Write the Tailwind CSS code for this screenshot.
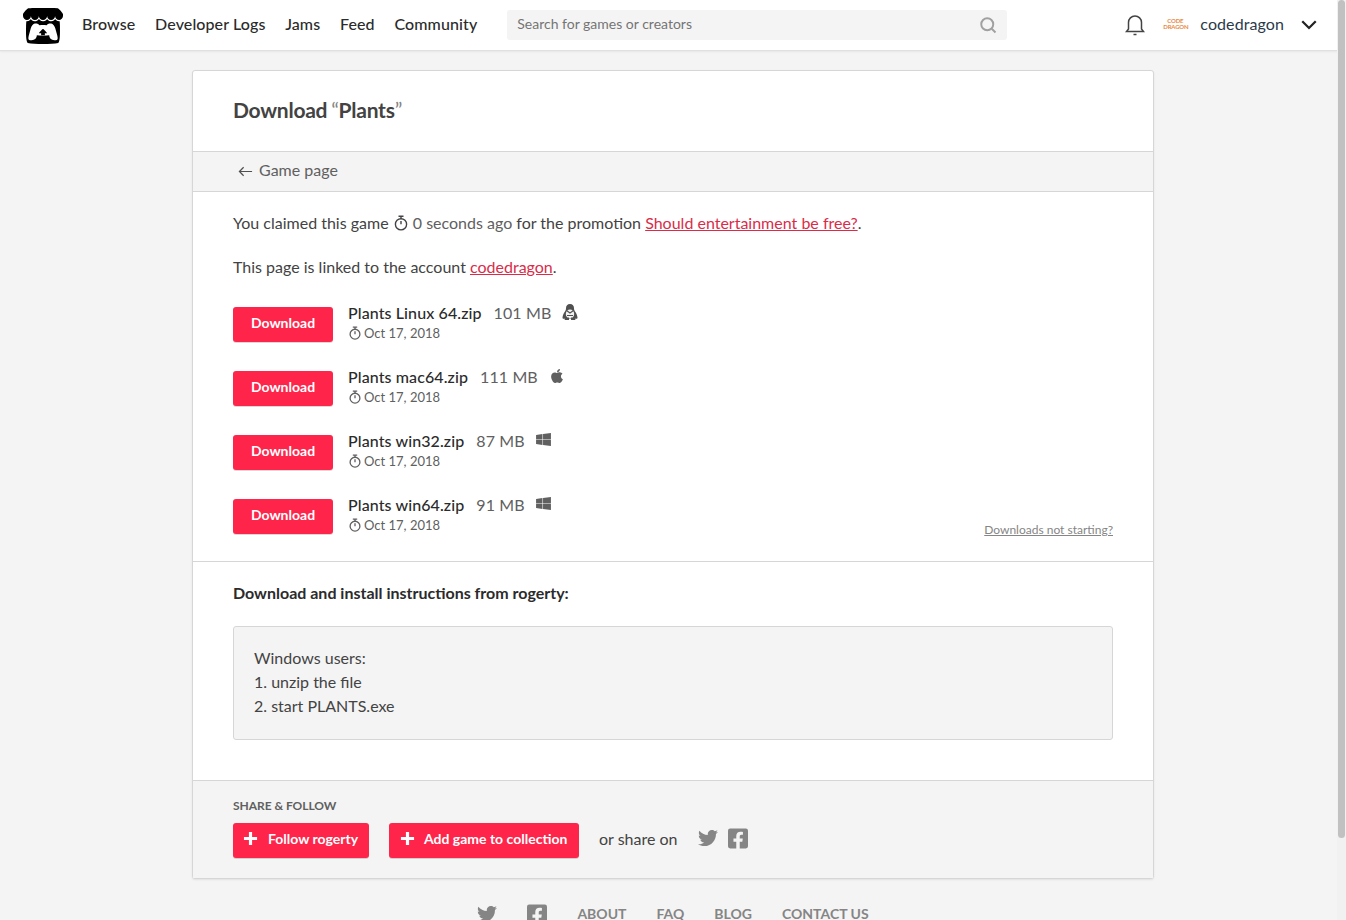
<!DOCTYPE html>
<html lang="en">
<head>
    <meta charset="UTF-8">
    <title>Download Plants</title>
    <script src="https://cdn.jsdelivr.net/npm/@tailwindcss/browser@4"></script>
</head>
<body class="bg-[#f4f4f4] text-[#434343] font-['Lato',sans-serif] text-base h-[920px] overflow-hidden relative">
    <!-- top bar -->
    <header class="h-[51px] bg-white border-b border-[#e0e0e0] shadow-[0_1px_2px_rgba(0,0,0,0.06)] flex items-center pl-[23px]">
        <svg viewBox="0 0 24 24" class="w-[40px] h-[40px] shrink-0 fill-black mt-[1px]"><path d="M3.13 1.338C2.08 1.96.02 4.328 0 4.95v1.03c0 1.303 1.22 2.45 2.325 2.45 1.33 0 2.436-1.102 2.436-2.41 0 1.308 1.07 2.41 2.4 2.41 1.328 0 2.362-1.102 2.362-2.41 0 1.308 1.137 2.41 2.466 2.41h.024c1.33 0 2.466-1.102 2.466-2.41 0 1.308 1.034 2.41 2.363 2.41 1.33 0 2.4-1.102 2.4-2.41 0 1.308 1.106 2.41 2.435 2.41C22.78 8.43 24 7.282 24 5.98V4.95c-.02-.62-2.082-2.99-3.13-3.612-3.253-.114-5.508-.134-8.87-.133-3.362 0-7.945.053-8.87.133zm6.376 6.477a2.74 2.74 0 0 1-.468.602c-.5.49-1.19.795-1.947.795a2.786 2.786 0 0 1-1.95-.795c-.182-.178-.32-.37-.446-.59-.127.222-.303.412-.486.59a2.788 2.788 0 0 1-1.95.795c-.092 0-.187-.025-.264-.052-.107 1.113-.152 2.176-.168 2.95v.005l-.006 1.167c.02 2.334-.23 7.564 1.03 8.85 1.952.454 5.545.662 9.15.663 3.605 0 7.198-.21 9.15-.664 1.26-1.284 1.01-6.514 1.03-8.848l-.006-1.167v-.004c-.016-.775-.06-1.838-.168-2.95-.077.026-.172.052-.263.052a2.788 2.788 0 0 1-1.95-.795c-.184-.178-.36-.368-.486-.59-.127.22-.265.412-.447.59a2.786 2.786 0 0 1-1.95.794c-.76 0-1.446-.303-1.948-.793a2.74 2.74 0 0 1-.468-.602 2.738 2.738 0 0 1-.467.602 2.772 2.772 0 0 1-1.98.793 2.77 2.77 0 0 1-1.947-.793 2.738 2.738 0 0 1-.467-.602zM7.54 10.57l.002.002c.79.002 1.49 0 2.36.95.683-.072 1.4-.108 2.118-.107.717 0 1.434.035 2.118.107.87-.95 1.57-.948 2.36-.95h.002c.373 0 1.865 0 2.904 2.92l1.116 4.005c.828 2.98-.265 3.053-1.628 3.056-2.02-.075-3.14-1.542-3.14-3.01-1.12.184-2.427.275-3.733.276-1.306 0-2.612-.092-3.733-.275 0 1.467-1.12 2.934-3.14 3.01-1.363-.004-2.456-.077-1.628-3.057l1.116-4.005c1.04-2.92 2.53-2.92 2.905-2.92zM12 13.7v.002c-.002.002-2.13 1.955-2.513 2.65l1.393-.056v1.215c0 .057.558.034 1.12.008.56.026 1.12.05 1.12-.008v-1.215l1.393.057C14.13 15.657 12 13.702 12 13.702z"/></svg>
        <nav class="flex gap-[19.75px] ml-[19px] font-medium text-[#2b2b2b] mt-[-3px] tracking-[0.1px]">
            <a href="#">Browse</a>
            <a href="#">Developer Logs</a>
            <a href="#">Jams</a>
            <a href="#">Feed</a>
            <a href="#">Community</a>
        </nav>
        <div class="ml-[30px] w-[500px] h-[30px] bg-[#f4f4f4] rounded-[3px] flex items-center justify-between pl-[10px] pr-[10px] text-sm text-[#757575] mt-[-1px]">
            <span class="mt-[-2px]">Search for games or creators</span>
            <svg viewBox="0 0 24 24" class="w-[18px] h-[18px] fill-none stroke-[#a0a0a0] stroke-[2.6]"><circle cx="11" cy="11" r="8"/><path d="M17 17l5 5"/></svg>
        </div>
        <svg viewBox="0 0 20 22" class="w-[20px] h-[22px] ml-[118px] fill-none stroke-[#434343] stroke-[1.5]"><path d="M3.500 15V8.500a6.500 6.500 0 0 1 13 0V15l2 2.500H1.500z"/><path d="M8.500 20.500h3"/></svg>
        <div class="ml-[18px] w-[24px] text-[6px] leading-[6px] font-bold text-center text-[#e8893f] tracking-[-0.2px] mt-[-3px]"><div>CODE</div><div>DRAGON</div></div>
        <span class="ml-[13px] text-[#2b3a4a] mt-[-3px] tracking-[0.1px]">codedragon</span>
        <svg viewBox="0 0 24 24" class="w-[18px] h-[18px] ml-[16px] fill-none stroke-[#222] stroke-[3] mt-[-1px]"><path d="M3 7l9 9 9-9"/></svg>
    </header>

    <!-- card -->
    <main class="w-[962px] mx-auto mt-[19px] bg-white border border-[#d6d6d6] rounded-[3px] shadow-[0_1px_2px_rgba(0,0,0,0.08)]">
        <h2 class="h-[80px] flex items-center px-[40px] pb-[2px] text-[21px] tracking-[-0.25px] font-bold text-[#434343] whitespace-pre"><span>Download </span><span class="font-normal text-[#858585] ml-[-1px]">“</span><span>Plants</span><span class="font-normal text-[#858585]">”</span></h2>

        <div class="h-[41px] bg-[#f4f4f4] border-y border-[#d6d6d6] flex items-center pl-[45px] text-[#606060]">
            <svg viewBox="0 0 16 16" class="w-[15px] h-[15px] mr-[6px] fill-none stroke-[#505050] stroke-[1.3]"><path d="M15 8H1.500M6 3.500L1.500 8 6 12.500"/></svg>
            <a href="#" class="mt-[-3px]">Game page</a>
        </div>

        <section class="px-[40px] pt-[19px] pb-[31px] border-b border-[#d6d6d6]">
            <p class="h-[24px] leading-[24px] flex items-center whitespace-pre">You claimed this game <svg viewBox="0 0 16 16" class="w-[16px] h-[16px] fill-none stroke-[#434343] stroke-[1.4] mt-[-1px]"><circle cx="8" cy="9.300" r="5.600"/><path d="M5.500 1.200h5M8 1.200v2.500M8 9.300V6"/></svg><span class="text-[#606060]"> 0 seconds ago</span> for the promotion <a href="#" class="text-[#da2c49] underline">Should entertainment be free?</a>.</p>
            <p class="mt-[20px] h-[24px] leading-[24px]">This page is linked to the account <a href="#" class="text-[#da2c49] underline">codedragon</a>.</p>

            <div class="relative mt-[24px] flex flex-col gap-[29px]">
                <div class="flex items-start h-[35px]">
                    <a href="#" class="mt-[4px] w-[100px] h-[35px] bg-[#ff2449] rounded-[3px] text-white text-sm font-bold flex items-center justify-center pb-[4px] shadow-[0_1px_0_rgba(0,0,0,0.15)]">Download</a>
                    <div class="ml-[15px]">
                        <div class="flex items-center h-[20px] leading-[20px] tracking-[0.1px]">
                            <strong class="font-medium text-[#2b2b2b]">Plants Linux 64.zip</strong>
                            <span class="ml-[12px] text-[#606060]">101 MB</span>
                            <svg viewBox="0 0 16 16" class="w-[16px] h-[16px] ml-[11px] mt-[-3px]"><path fill="#505050" d="M8 0c2.600 0 4 1.800 4 4.200 0 1.700.6 2.600 1.400 3.800.8 1.200 1.800 3 2.100 5.500.1.900-.4 1.200-1.200 1.200H1.700c-.8 0-1.300-.3-1.200-1.200C.8 11 1.800 9.200 2.600 8 3.400 6.800 4 5.900 4 4.200 4 1.800 5.400 0 8 0z"/><ellipse cx="8" cy="10" rx="4.200" ry="4.600" fill="#f2f2f2"/><path d="M4.500 6.500L8 9l3.500-2.500M5 11.500h6" fill="none" stroke="#505050" stroke-width="1.100"/><path fill="#505050" d="M3.500 13.500h3.500V16H2.500zM9 13.500h3.500l1 2.500H9z"/></svg>
                        </div>
                        <div class="flex items-center text-[13px] text-[#606060] h-[20px] mt-[1px]"><svg viewBox="0 0 16 16" class="w-[14px] h-[14px] mr-[2px] mt-[-3px] fill-none stroke-[#606060] stroke-[1.500]"><circle cx="8" cy="9.300" r="5.600"/><path d="M5.500 1.200h5M8 1.200v2.500M8 9.300V6"/></svg>Oct 17, 2018</div>
                    </div>
                </div>
                <div class="flex items-start h-[35px]">
                    <a href="#" class="mt-[4px] w-[100px] h-[35px] bg-[#ff2449] rounded-[3px] text-white text-sm font-bold flex items-center justify-center pb-[4px] shadow-[0_1px_0_rgba(0,0,0,0.15)]">Download</a>
                    <div class="ml-[15px]">
                        <div class="flex items-center h-[20px] leading-[20px] tracking-[0.1px]">
                            <strong class="font-medium text-[#2b2b2b]">Plants mac64.zip</strong>
                            <span class="ml-[12px] text-[#606060]">111 MB</span>
                            <svg viewBox="0 0 384 512" class="w-[14px] h-[16px] ml-[12px] mt-[-3px] fill-[#606060]"><path d="M318.700 268.700c-.2-36.700 16.400-64.400 50-84.800-18.800-26.900-47.200-41.700-84.700-44.600-35.500-2.800-74.300 20.700-88.500 20.700-15 0-49.400-19.700-76.400-19.700C63.300 141.200 4 184.800 4 273.500q0 39.300 14.400 81.200c12.800 36.700 59 126.700 107.200 125.200 25.200-.6 43-17.900 75.800-17.900 31.800 0 48.300 17.900 76.400 17.900 48.600-.7 90.400-82.500 102.600-119.300-65.200-30.700-61.700-90-61.700-91.900zm-56.600-164.200c27.300-32.400 24.800-61.900 24-72.500-24.100 1.400-52 16.400-67.900 34.900-17.500 19.800-27.800 44.300-25.600 71.900 26.100 2 49.900-11.400 69.500-34.300z"/></svg>
                        </div>
                        <div class="flex items-center text-[13px] text-[#606060] h-[20px] mt-[1px]"><svg viewBox="0 0 16 16" class="w-[14px] h-[14px] mr-[2px] mt-[-3px] fill-none stroke-[#606060] stroke-[1.500]"><circle cx="8" cy="9.300" r="5.600"/><path d="M5.500 1.200h5M8 1.200v2.500M8 9.300V6"/></svg>Oct 17, 2018</div>
                    </div>
                </div>
                <div class="flex items-start h-[35px]">
                    <a href="#" class="mt-[4px] w-[100px] h-[35px] bg-[#ff2449] rounded-[3px] text-white text-sm font-bold flex items-center justify-center pb-[4px] shadow-[0_1px_0_rgba(0,0,0,0.15)]">Download</a>
                    <div class="ml-[15px]">
                        <div class="flex items-center h-[20px] leading-[20px] tracking-[0.1px]">
                            <strong class="font-medium text-[#2b2b2b]">Plants win32.zip</strong>
                            <span class="ml-[12px] text-[#606060]">87 MB</span>
                            <svg viewBox="0 0 16 14" class="w-[15px] h-[13px] ml-[11px] mt-[-3px] fill-[#606060]"><path d="M0 2.200L6.900 1.100V6.700H0zM7.500 1L16 0V6.700H7.500zM0 7.300H6.900V12.900L0 11.800zM7.500 7.300H16V14L7.500 13z"/></svg>
                        </div>
                        <div class="flex items-center text-[13px] text-[#606060] h-[20px] mt-[1px]"><svg viewBox="0 0 16 16" class="w-[14px] h-[14px] mr-[2px] mt-[-3px] fill-none stroke-[#606060] stroke-[1.500]"><circle cx="8" cy="9.300" r="5.600"/><path d="M5.500 1.200h5M8 1.200v2.500M8 9.300V6"/></svg>Oct 17, 2018</div>
                    </div>
                </div>
                <div class="flex items-start h-[35px]">
                    <a href="#" class="mt-[4px] w-[100px] h-[35px] bg-[#ff2449] rounded-[3px] text-white text-sm font-bold flex items-center justify-center pb-[4px] shadow-[0_1px_0_rgba(0,0,0,0.15)]">Download</a>
                    <div class="ml-[15px]">
                        <div class="flex items-center h-[20px] leading-[20px] tracking-[0.1px]">
                            <strong class="font-medium text-[#2b2b2b]">Plants win64.zip</strong>
                            <span class="ml-[12px] text-[#606060]">91 MB</span>
                            <svg viewBox="0 0 16 14" class="w-[15px] h-[13px] ml-[11px] mt-[-3px] fill-[#606060]"><path d="M0 2.200L6.900 1.100V6.700H0zM7.500 1L16 0V6.700H7.500zM0 7.300H6.900V12.900L0 11.800zM7.500 7.300H16V14L7.500 13z"/></svg>
                        </div>
                        <div class="flex items-center text-[13px] text-[#606060] h-[20px] mt-[1px]"><svg viewBox="0 0 16 16" class="w-[14px] h-[14px] mr-[2px] mt-[-3px] fill-none stroke-[#606060] stroke-[1.500]"><circle cx="8" cy="9.300" r="5.600"/><path d="M5.500 1.200h5M8 1.200v2.500M8 9.300V6"/></svg>Oct 17, 2018</div>
                    </div>
                    <a href="#" class="ml-auto mt-[25px] text-xs leading-[20px] text-[#858585] underline">Downloads not starting?</a>
                </div>
            </div>
        </section>

        <section class="px-[40px] pt-[19px] pb-[40px]">
            <h3 class="font-bold text-[#2b2b2b] leading-[24px]">Download and install instructions from rogerty:</h3>
            <div class="mt-[21px] h-[114px] bg-[#f4f4f4] border border-[#d6d6d6] rounded-[3px] px-[20px] py-[19px] leading-[24px]">
                <p>Windows users:</p>
                <p>1. unzip the file</p>
                <p>2. start PLANTS.exe</p>
            </div>
        </section>

        <section class="h-[98px] bg-[#f4f4f4] border-t border-[#d6d6d6] px-[40px] pt-[16px]">
            <div class="text-xs font-bold text-[#606060] leading-[18px] uppercase tracking-[-0.05px]">Share &amp; Follow</div>
            <div class="flex items-center mt-[8px]">
                <a href="#" class="h-[35px] w-[136px] bg-[#ff2449] rounded-[3px] text-white text-sm font-bold flex items-center pl-[10px] pb-[4px] shadow-[0_1px_0_rgba(0,0,0,0.15)]">
                    <svg viewBox="0 0 16 16" class="w-[15px] h-[15px] mr-[10px] fill-none stroke-white stroke-[3.4]"><path d="M8 1v14M1 8h14"/></svg>Follow rogerty</a>
                <a href="#" class="ml-[20px] h-[35px] w-[190px] bg-[#ff2449] rounded-[3px] text-white text-sm font-bold flex items-center pl-[11px] pb-[4px] shadow-[0_1px_0_rgba(0,0,0,0.15)]">
                    <svg viewBox="0 0 16 16" class="w-[15px] h-[15px] mr-[9px] fill-none stroke-white stroke-[3.4]"><path d="M8 1v14M1 8h14"/></svg>Add game to collection</a>
                <span class="ml-[20px] mt-[-3px]">or share on</span>
                <svg viewBox="0 0 512 512" class="w-[20px] h-[20px] ml-[20px] mt-[-5px] fill-[#858585]"><path d="M459.370 151.716c.325 4.548.325 9.097.325 13.645 0 138.720-105.583 298.558-298.558 298.558-59.452 0-114.680-17.219-161.137-47.106 8.447.974 16.568 1.299 25.340 1.299 49.055 0 94.213-16.568 130.274-44.832-46.132-.975-84.792-31.188-98.112-72.772 6.498.974 12.995 1.624 19.818 1.624 9.421 0 18.843-1.300 27.614-3.573-48.081-9.747-84.143-51.980-84.143-102.985v-1.299c13.969 7.797 30.214 12.670 47.431 13.319-28.264-18.843-46.781-51.005-46.781-87.391 0-19.492 5.197-37.360 14.294-52.954 51.655 63.675 129.300 105.258 216.365 109.807-1.624-7.797-2.599-15.918-2.599-24.040 0-57.828 46.782-104.934 104.934-104.934 30.213 0 57.502 12.670 76.670 33.137 23.715-4.548 46.456-13.320 66.599-25.340-7.798 24.366-24.366 44.833-46.132 57.827 21.117-2.273 41.584-8.122 60.426-16.243-14.292 20.791-32.161 39.308-52.628 54.253z"/></svg>
                <svg viewBox="0 0 448 512" class="w-[20px] h-[23px] ml-[10px] mt-[-5px] fill-[#858585]"><path d="M400 32H48A48 48 0 0 0 0 80v352a48 48 0 0 0 48 48h137.250V327.690h-63V256h63v-54.640c0-62.150 37-96.480 93.670-96.480 27.140 0 55.520 4.840 55.520 4.840v61h-31.270c-30.810 0-40.420 19.120-40.420 38.730V256h68.780l-11 71.690h-57.780V480H400a48 48 0 0 0 48-48V80a48 48 0 0 0-48-48z"/></svg>
            </div>
        </section>
    </main>

    <!-- page footer -->
    <footer class="flex items-center justify-center mt-[23px] text-[#858585] text-sm font-bold uppercase leading-[24px] gap-[30px]">
        <svg viewBox="0 0 512 512" class="w-[20px] h-[20px] fill-[#858585]"><path d="M459.370 151.716c.325 4.548.325 9.097.325 13.645 0 138.720-105.583 298.558-298.558 298.558-59.452 0-114.680-17.219-161.137-47.106 8.447.974 16.568 1.299 25.340 1.299 49.055 0 94.213-16.568 130.274-44.832-46.132-.975-84.792-31.188-98.112-72.772 6.498.974 12.995 1.624 19.818 1.624 9.421 0 18.843-1.300 27.614-3.573-48.081-9.747-84.143-51.980-84.143-102.985v-1.299c13.969 7.797 30.214 12.670 47.431 13.319-28.264-18.843-46.781-51.005-46.781-87.391 0-19.492 5.197-37.360 14.294-52.954 51.655 63.675 129.300 105.258 216.365 109.807-1.624-7.797-2.599-15.918-2.599-24.040 0-57.828 46.782-104.934 104.934-104.934 30.213 0 57.502 12.670 76.670 33.137 23.715-4.548 46.456-13.320 66.599-25.340-7.798 24.366-24.366 44.833-46.132 57.827 21.117-2.273 41.584-8.122 60.426-16.243-14.292 20.791-32.161 39.308-52.628 54.253z"/></svg>
        <svg viewBox="0 0 448 512" class="w-[20px] h-[23px] fill-[#858585]"><path d="M400 32H48A48 48 0 0 0 0 80v352a48 48 0 0 0 48 48h137.250V327.690h-63V256h63v-54.640c0-62.150 37-96.480 93.670-96.480 27.140 0 55.520 4.840 55.520 4.840v61h-31.270c-30.810 0-40.420 19.120-40.420 38.730V256h68.780l-11 71.690h-57.780V480H400a48 48 0 0 0 48-48V80a48 48 0 0 0-48-48z"/></svg>
        <a href="#">About</a>
        <a href="#">FAQ</a>
        <a href="#">Blog</a>
        <a href="#">Contact Us</a>
    </footer>

    <!-- overlay scrollbar -->
    <div class="absolute top-0 right-0 w-[9px] h-[920px] bg-[#f1f1f1]"><div class="w-[7px] h-[838px] ml-[1px] bg-[#c1c1c1] rounded-[4px]"></div></div>
</body>
</html>
